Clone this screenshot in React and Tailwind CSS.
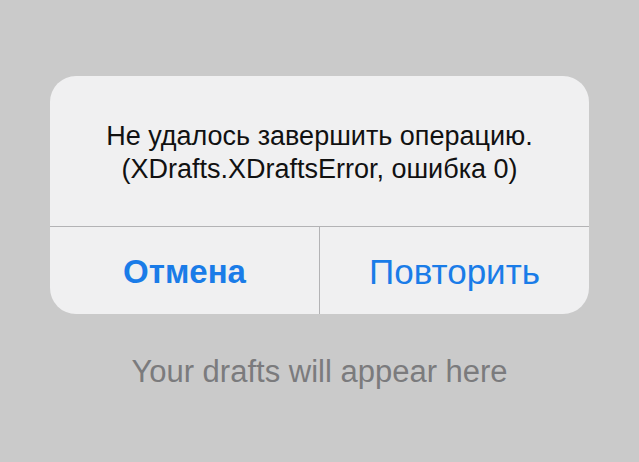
export default function App() {
  return (
    <div
      className="w-[639px] h-[462px] bg-[#cacaca] flex flex-col items-center pt-[76px]"
      style={{ fontFamily: '"Liberation Sans", "Noto Sans", sans-serif' }}
    >
      <div className="w-[539px] h-[238px] bg-[#f0f0f1] rounded-[26px] flex flex-col overflow-hidden">
        <div className="h-[150px] flex flex-col items-center justify-center text-[27px] leading-[33px] text-[#111] text-center pt-[4px]">
          <p>Не удалось завершить операцию.</p>
          <p>(XDrafts.XDraftsError, ошибка 0)</p>
        </div>
        <div className="flex-1 flex border-t border-[#b3b3b5]">
          <button className="flex-1 flex items-center justify-center text-[33px] leading-[40px] font-bold text-[#1a7ce8] pt-[2px]">
            Отмена
          </button>
          <div className="w-px bg-[#b3b3b5]" />
          <button className="flex-1 flex items-center justify-center text-[35px] leading-[40px] text-[#1a7ce8] pt-[2px]">
            Повторить
          </button>
        </div>
      </div>
      <p className="mt-[38px] text-[31px] leading-[40px] text-[#7b7b7d]">Your drafts will appear here</p>
    </div>
  );
}
